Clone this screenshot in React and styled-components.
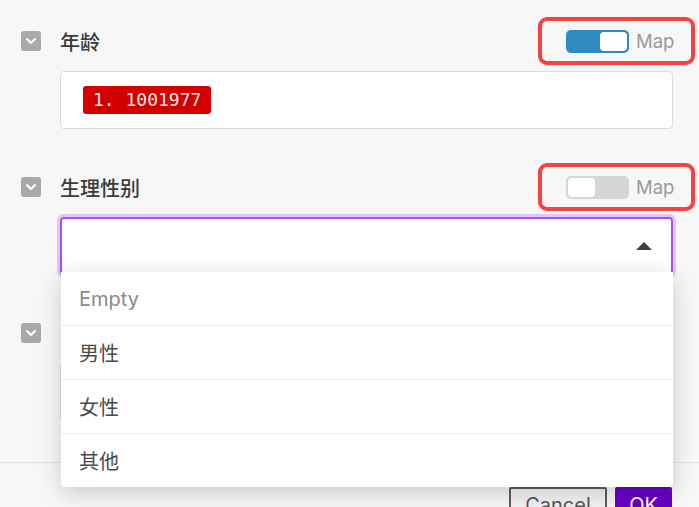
import React from "react";
import styled, { createGlobalStyle } from "styled-components";

const Global = createGlobalStyle`
  html, body { margin: 0; padding: 0; background: #f7f7f7; }
  body { font-family: Inter, "Noto Sans", "Noto Sans CJK SC", sans-serif; overflow: hidden; }
`;

const Page = styled.div`
  width: 699px;
  height: 507px;
  display: flex;
  flex-direction: column;
  background: #f7f7f7;
  overflow: hidden;
`;

const Content = styled.div`
  display: flex;
  flex-direction: column;
  gap: 34px;
  padding: 17px 4px 41px 21px;
`;

const Field = styled.div`
  display: flex;
  flex-direction: column;
  gap: 6px;
`;

const Header = styled.div`
  height: 48px;
  display: flex;
  align-items: center;
  justify-content: space-between;
`;

const LabelGroup = styled.div`
  display: flex;
  align-items: center;
  gap: 19px;
`;

const Check = styled.span`
  width: 20px;
  height: 20px;
  border-radius: 3px;
  background: #a9a9a9;
  display: flex;
  align-items: center;
  justify-content: center;
`;

const Label = styled.span`
  font-family: "Noto Sans CJK SC", sans-serif;
  font-size: 20px;
  font-weight: 500;
  color: #3a3a3a;
`;

const Highlight = styled.div`
  box-sizing: border-box;
  height: 48px;
  width: 157px;
  border: 4px solid #f54242;
  border-radius: 9px;
  display: flex;
  align-items: center;
  gap: 7px;
  padding-left: 24px;
`;

const Toggle = styled.span`
  box-sizing: border-box;
  width: 63px;
  height: 23px;
  border-radius: 5px;
  background: ${(p) => (p.$on ? "#2e8bc0" : "#d6d6d6")};
  display: flex;
  align-items: center;
  justify-content: ${(p) => (p.$on ? "flex-end" : "flex-start")};
  padding: 2px;
`;

const Knob = styled.span`
  width: 27px;
  height: 19px;
  border-radius: 4px;
  background: #fff;
`;

const MapText = styled.span`
  font-family: Inter, "Noto Sans", sans-serif;
  font-size: 18.5px;
  color: #9a9a9a;
`;

const Control = styled.div`
  position: relative;
  margin-left: 39px;
  margin-right: 22px;
  box-sizing: border-box;
  height: 58px;
  background: #fff;
  border-radius: 4px;
  border: ${(p) => (p.$focus ? "2px solid #a552f2" : "1px solid #dcdcdc")};
  box-shadow: ${(p) => (p.$focus ? "0 0 0 3px rgba(168, 85, 247, 0.3)" : "none")};
  display: flex;
  align-items: center;
  padding: 0 22px;
  justify-content: ${(p) => (p.$focus ? "flex-end" : "flex-start")};
`;

const Tag = styled.span`
  background: #d40000;
  color: #ffe4e4;
  border-radius: 3px;
  font-family: "DejaVu Sans Mono", "Liberation Mono", monospace;
  font-size: 18px;
  height: 28px;
  line-height: 28px;
  padding: 0 10px;
`;

const Caret = styled.span`
  width: 0;
  height: 0;
  border-left: 8px solid transparent;
  border-right: 8px solid transparent;
  border-bottom: 8px solid #3b4048;
  margin-right: -3px;
`;

const Dropdown = styled.ul`
  position: absolute;
  left: -1px;
  right: -2px;
  top: calc(100% - 1px);
  margin: 0;
  padding: 0;
  list-style: none;
  background: #fff;
  border-radius: 0 0 4px 4px;
  box-shadow: 0 6px 24px rgba(0, 0, 0, 0.18);
  z-index: 5;
`;

const Item = styled.li`
  height: 53px;
  display: flex;
  align-items: center;
  padding-left: 18px;
  font-family: ${(p) => (p.$muted ? "Inter, \"Noto Sans\", sans-serif" : "\"Noto Sans CJK SC\", sans-serif")};
  font-size: 20px;
  color: ${(p) => (p.$muted ? "#8a8a8a" : "#4a4a4a")};
  border-top: ${(p) => (p.$first ? "none" : "1px solid #ececec")};
`;

const Footer = styled.div`
  border-top: 1px solid #e3e3e3;
  display: flex;
  justify-content: flex-end;
  gap: 8px;
  padding: 24px 27px 0 0;
`;

const Button = styled.button`
  box-sizing: border-box;
  height: 36px;
  padding: 0 12px;
  font-family: Inter, "Noto Sans", sans-serif;
  font-size: 20px;
  border-radius: 2px;
  border: 2px solid ${(p) => (p.$primary ? "#6800c6" : "#5e5e5e")};
  background: ${(p) => (p.$primary ? "#6800c6" : "#f3f3f3")};
  color: ${(p) => (p.$primary ? "#fff" : "#555")};
  width: ${(p) => (p.$primary ? "57px" : "98px")};
`;

const Chevron = () => (
  <svg width="12" height="8" viewBox="0 0 12 8">
    <polyline points="2,2 6,6 10,2" fill="none" stroke="#fff" strokeWidth="2" strokeLinecap="round" strokeLinejoin="round" />
  </svg>
);

const FieldHeader = ({ label, on, highlight = true }) => (
  <Header>
    <LabelGroup>
      <Check>
        <Chevron />
      </Check>
      <Label>{label}</Label>
    </LabelGroup>
    {highlight && (
      <Highlight>
        <Toggle $on={on}>
          <Knob />
        </Toggle>
        <MapText>Map</MapText>
      </Highlight>
    )}
  </Header>
);

export default function App() {
  const options = ["男性", "女性", "其他"];
  return (
    <Page>
      <Global />
      <Content>
        <Field>
          <FieldHeader label="年龄" on />
          <Control>
            <Tag>1. 1001977</Tag>
          </Control>
        </Field>
        <Field>
          <FieldHeader label="生理性别" on={false} />
          <Control $focus>
            <Caret />
            <Dropdown>
              <Item $first $muted>Empty</Item>
              {options.map((o) => (
                <Item key={o}>{o}</Item>
              ))}
            </Dropdown>
          </Control>
        </Field>
        <Field>
          <FieldHeader label="" highlight={false} />
          <Control />
        </Field>
      </Content>
      <Footer>
        <Button>Cancel</Button>
        <Button $primary>OK</Button>
      </Footer>
    </Page>
  );
}
